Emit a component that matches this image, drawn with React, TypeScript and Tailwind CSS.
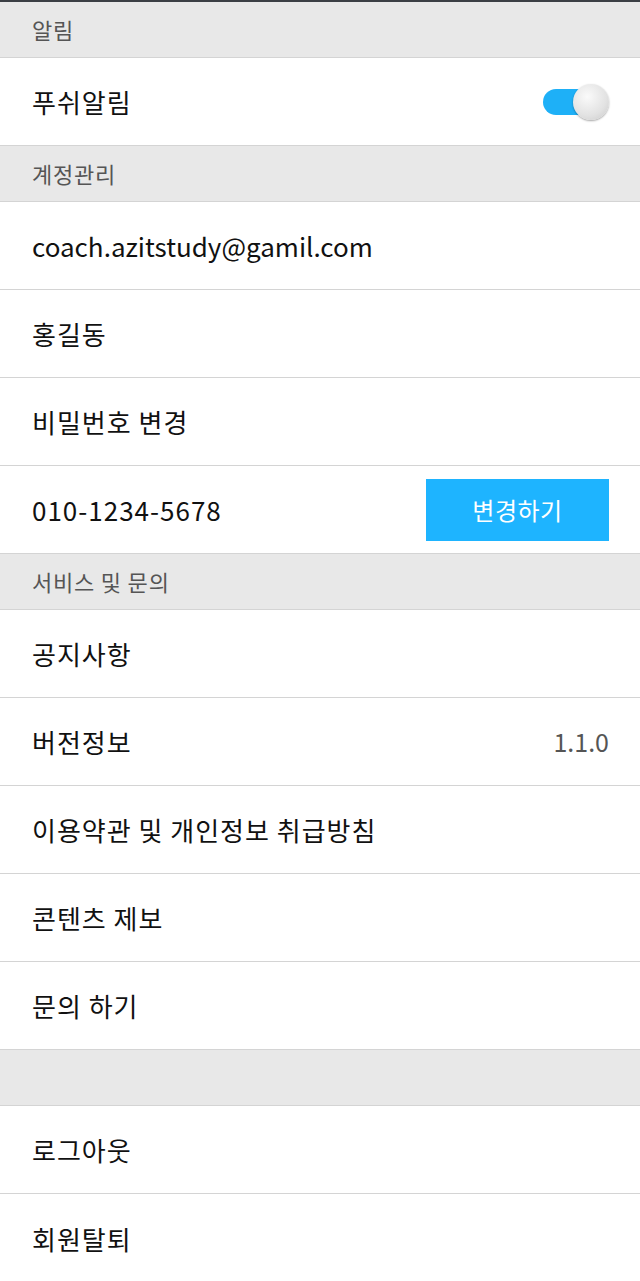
import React from "react";

const font = { fontFamily: '"Noto Sans CJK KR", "Noto Sans", sans-serif' };

function Header({ label }: { label?: string }) {
  return (
    <div className="h-[56px] bg-[#e8e8e8] border-b border-[#d4d4d4] flex items-center px-[32px] text-[22px] tracking-[0.8px] text-[#555555]">
      {label}
    </div>
  );
}

function Row({
  children,
  right,
  last,
  tight,
}: {
  children: React.ReactNode;
  right?: React.ReactNode;
  last?: boolean;
  tight?: boolean;
}) {
  return (
    <div
      className={
        "h-[88px] bg-white flex items-center justify-between pl-[32px] pr-[31px] " +
        (last ? "" : "border-b border-[#d4d4d4]")
      }
    >
      <span className={"text-[26px] text-[#111111] " + (tight ? "tracking-[0px]" : "tracking-[1px]")}>{children}</span>
      {right}
    </div>
  );
}

function Toggle() {
  return (
    <div className="relative w-[66px] h-[36px] flex items-center">
      <div className="w-[60px] h-[26px] rounded-full bg-[#1eb0f7]" />
      <div className="absolute right-0 top-0 w-[36px] h-[36px] rounded-full bg-[radial-gradient(circle_at_40%_35%,#fafafa,#e2e2e2_60%,#c8c8c8)] shadow-[0_1px_2px_rgba(0,0,0,0.35)]" />
    </div>
  );
}

export default function App() {
  return (
    <div style={font} className="w-[640px] bg-white">
      <div className="h-[2px] bg-[#3b3f44]" />
      <Header label="알림" />
      <Row right={<Toggle />}>푸쉬알림</Row>
      <Header label="계정관리" />
      <Row tight>coach.azitstudy@gamil.com</Row>
      <Row>홍길동</Row>
      <Row>비밀번호 변경</Row>
      <Row
        right={
          <button className="w-[183px] h-[62px] bg-[#1eb4ff] text-white text-[24px] tracking-[0.5px] flex items-center justify-center">
            변경하기
          </button>
        }
      >
        010-1234-5678
      </Row>
      <Header label="서비스 및 문의" />
      <Row>공지사항</Row>
      <Row right={<span className="text-[25px] text-[#555555]">1.1.0</span>}>버전정보</Row>
      <Row>이용약관 및 개인정보 취급방침</Row>
      <Row>콘텐츠 제보</Row>
      <Row>문의 하기</Row>
      <Header />
      <Row>로그아웃</Row>
      <Row last>회원탈퇴</Row>
    </div>
  );
}
